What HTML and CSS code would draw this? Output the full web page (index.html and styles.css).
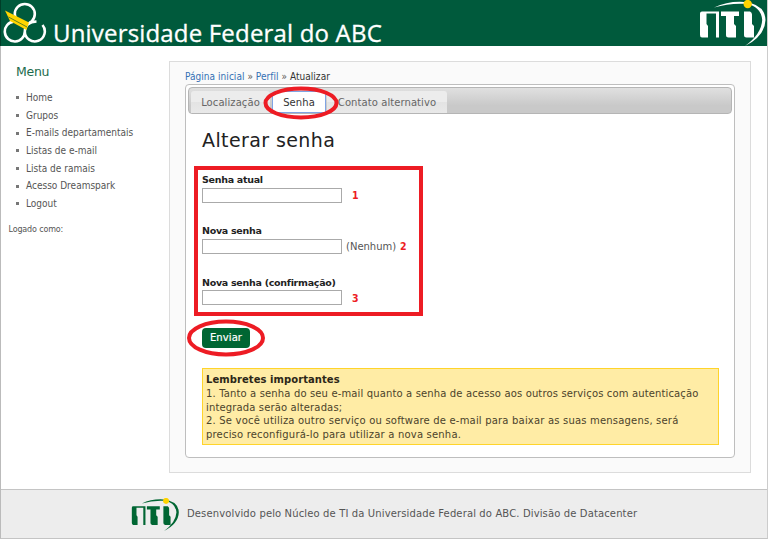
FILE: index.html
```
<!DOCTYPE html>
<html lang="pt-BR">
<head>
<meta charset="utf-8">
<title>Alterar senha</title>
<link rel="stylesheet" href="styles.css">
</head>
<body>
<svg class="defs" width="0" height="0" aria-hidden="true">
  <symbol id="nti" viewBox="0 0 68 46">
    <path d="M3 11.500q-2 0-2 2V35q0 2.500 2 2.500h6V26L7.500 24V13.500H17v24h3v-26zM22 11.500v4.500h5v19q0 2.500 2.500 2.500H37V26l-2-2v-8h5v-4.500zM45 11.500v23.500q0 2.500 2.500 2.500h7.500V26l-2-2v-9.500q0-2-2-3z" fill="currentColor"/>
    <path d="M15 7.500Q29 1 45 2Q66 4 66.500 20Q66 36 46 46Q62.500 34 63.200 20Q62 6 46 3.800Q30 3 15 7.500z" fill="currentColor"/>
    <circle cx="48.700" cy="4" r="4.200" fill="#ffd400"/>
  </symbol>
</svg>
<div class="page">
  <header class="top">
    <svg class="mark" viewBox="0 0 48 44" aria-hidden="true">
      <g fill="none" stroke="#fff" stroke-width="2.6">
        <circle cx="24.8" cy="14" r="10"/>
        <path d="M13.500 21.600A10 10 0 1 0 24.800 31.500A10 10 0 1 0 42.500 25M24.800 31.500Q25 22 36.500 21.500"/>
      </g>
      <path d="M5 10.500L29 22.500L26.500 30L10 21z" fill="#ffd400"/>
      <path d="M8.500 17L27 27" stroke="#4c7a20" stroke-width=".9" fill="none"/>
    </svg>
    <div class="brand">Universidade Federal do ABC</div>
    <svg class="nti-top" viewBox="0 0 68 46"><use href="#nti"/></svg>
  </header>
  <div class="main">
    <nav class="side">
      <h2>Menu</h2>
      <ul>
        <li>Home</li><li>Grupos</li><li>E-mails departamentais</li><li>Listas de e-mail</li><li>Lista de ramais</li><li>Acesso Dreamspark</li><li>Logout</li>
      </ul>
      <p class="logged">Logado como:</p>
    </nav>
    <main class="panel">
      <div class="crumbs"><a>Página inicial</a> » <a>Perfil</a> » <b>Atualizar</b></div>
      <section class="box">
        <div class="tabs">
          <div class="tab first">Localização</div>
          <div class="tab active">Senha
            <svg class="ring ring-tab" viewBox="0 0 76 34"><ellipse cx="38" cy="17" rx="35.5" ry="14.5"/></svg>
          </div>
          <div class="tab last">Contato alternativo</div>
        </div>
        <h1>Alterar senha</h1>
        <form class="fields">
          <div class="field"><label>Senha atual</label><div class="line"><span class="input"></span><em class="n1">1</em></div></div>
          <div class="field"><label>Nova senha</label><div class="line"><span class="input"></span><span class="hint">(Nenhum)</span><em class="n2">2</em></div></div>
          <div class="field"><label>Nova senha (confirmação)</label><div class="line"><span class="input"></span><em class="n3">3</em></div></div>
        </form>
        <div class="send">Enviar
          <svg class="ring ring-send" viewBox="0 0 80 40"><ellipse cx="40" cy="20" rx="37" ry="16.5"/></svg>
        </div>
        <div class="note">
          <strong>Lembretes importantes</strong>
          <div>1. Tanto a senha do seu e-mail quanto a senha de acesso aos outros serviços com autenticação</div>
          <div>integrada serão alteradas;</div>
          <div class="loose">2. Se você utiliza outro serviço ou software de e-mail para baixar as suas mensagens, será</div>
          <div class="loose">preciso reconfigurá-lo para utilizar a nova senha.</div>
        </div>
      </section>
    </main>
  </div>
  <footer class="foot">
    <svg class="nti-foot" viewBox="0 0 68 46"><use href="#nti"/></svg>
    <span>Desenvolvido pelo Núcleo de TI da Universidade Federal do ABC. Divisão de Datacenter</span>
  </footer>
</div>
</body>
</html>
```
FILE: styles.css
```
* { box-sizing: border-box; }
body { margin: 0; background: #fff; color: #555; font: 10px/14px "DejaVu Sans", sans-serif; overflow: hidden; }
.defs { position: absolute; }
.page { width: 768px; height: 539px; border-left: 1px solid #bbb; border-right: 1px solid #ccc; border-bottom: 1px solid #c4c4c4; }
.top { height: 46px; background: #005a3c; display: flex; align-items: flex-start; margin-left: -1px; border-left: 1px solid #003d28; color: #fff; }
.mark { width: 48px; height: 44px; margin-left: -1px; flex: none; }
.brand { font: 24px/30px "Open Sans", sans-serif; margin: 18px 0 0 5px; white-space: nowrap; -webkit-text-stroke: .3px #fff; letter-spacing: .18px; }
.nti-top { width: 68px; height: 46px; margin-left: auto; color: #fff; flex: none; }
.main { height: 443px; display: flex; padding-top: 15px; }
.side { width: 168px; flex: none; font-family: "DejaVu Sans Condensed", "DejaVu Sans", sans-serif; font-stretch: condensed; }
.side h2 { margin: 3px 0 9px 15px; font: 12.5px/16px "DejaVu Sans", sans-serif; color: #1c6b4c; letter-spacing: -.3px; }
.side ul { list-style: none; margin: 0 0 0 15px; padding: 0; }
.side li { display: flex; align-items: center; height: 17.7px; font-size: 10px; white-space: nowrap; }
.side li::before { content: ""; width: 3px; height: 3px; background: #777; margin-right: 7px; }
.logged { margin: 10px 0 0 7.5px; font: 8px/14px "DejaVu Sans", sans-serif; letter-spacing: -.15px; }
.panel { width: 582px; height: 412px; border: 1px solid #dcdcdc; background: #fafafa; padding: 8px 15px; }
.crumbs { height: 14px; white-space: pre; font-family: "DejaVu Sans Condensed", "DejaVu Sans", sans-serif; font-stretch: condensed; letter-spacing: .04px; }
.crumbs a { color: #3370b4; }
.crumbs b { font-weight: 400; color: #333; }
.box { width: 550px; height: 374px; border: 1px solid #bebebe; border-radius: 4px; background: #fff; padding: 2px; }
.tabs { height: 27px; border: 1px solid #b5b5b5; border-radius: 4px; background: linear-gradient(#e0e0e0, #c9c9c9 70%, #c9c9c9); display: flex; padding-top: 3px; }
.tab { height: 22px; line-height: 23px; text-align: center; white-space: nowrap; background: linear-gradient(#ececec 50%, #e3e3e3 50%, #e9e9e9); color: #666; border-radius: 3px 3px 0 0; letter-spacing: .08px; }
.first { width: 79px; margin-left: 2px; }
.active { width: 54px; margin-left: 2px; background: #fff; color: #333; border: 1px solid #7fa4e4; line-height: 21px; position: relative; }
.last { width: 120px; margin-left: 1px; }
.ring { position: absolute; z-index: 2; fill: none; stroke: #ed1c24; stroke-width: 4; }
.ring-tab { width: 76px; height: 34px; left: -10px; top: -6px; }
h1 { margin: 13px 0 13px 14px; font: 19px/26px "DejaVu Sans", sans-serif; color: #222; letter-spacing: .4px; }
.fields { width: 229px; height: 150px; margin: 0 0 0 6px; border: 4px solid #ed1c24; padding: 2px 4px; }
.field { height: 51.4px; }
.field label { display: block; height: 15px; font: bold 9.5px/15px "DejaVu Sans", sans-serif; color: #222; white-space: nowrap; letter-spacing: -.28px; }
.line { display: flex; height: 16px; align-items: center; }
.input { width: 140px; height: 15px; border: 1px solid #aaa; background: #fff; flex: none; }
.hint { margin: 2px 0 0 4px; width: 54px; letter-spacing: 0; }
.line em { font: bold 10.5px/14px "DejaVu Sans Condensed", "DejaVu Sans", sans-serif; font-stretch: condensed; color: #ed1c24; }
.n1, .n3 { margin-left: 10px; }
.send { position: relative; width: 48px; height: 20px; margin: 12px 0 0 14px; border-radius: 4px; background: #006633; color: #fff; text-align: center; line-height: 20px; letter-spacing: .1px; -webkit-text-stroke: .2px #fff; }
.ring-send { width: 80px; height: 40px; left: -16px; top: -10px; }
.note { width: 517px; height: 77px; margin: 20px 0 0 14px; border: 1px solid #ffd42a; background: #ffeca5; padding: 4px 3px; color: #4b432b; line-height: 13.8px; white-space: nowrap; letter-spacing: .14px; }
.note strong { display: block; color: #2c2718; letter-spacing: .06px; }
.note .loose { letter-spacing: .19px; }
.foot { height: 49px; border-top: 1px solid #c4c4c4; background: #ededed; display: flex; align-items: center; color: #555; white-space: nowrap; letter-spacing: .13px; }
.nti-foot { width: 49px; height: 33px; margin: 0 7px 0 130px; color: #006633; }
```
